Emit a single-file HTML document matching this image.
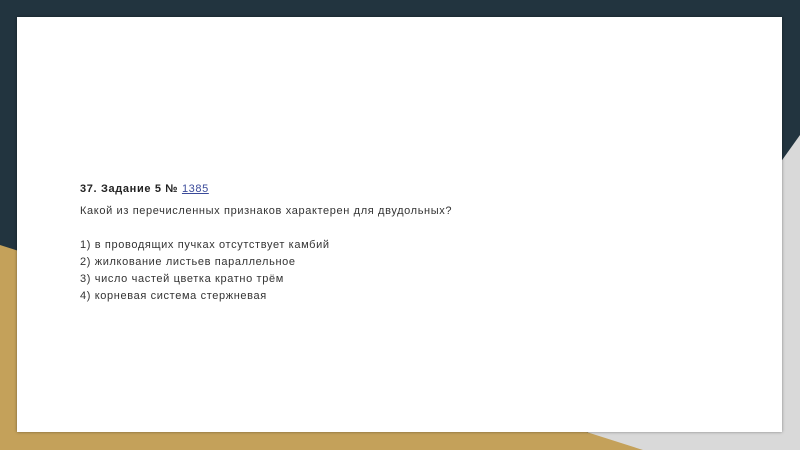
<!DOCTYPE html>
<html><head><meta charset="utf-8"><style>
html,body{margin:0;padding:0;}
body{width:800px;height:450px;position:relative;overflow:hidden;background:#22343f;font-family:"Liberation Sans",sans-serif;}
svg.bg{position:absolute;left:0;top:0;}
.card{position:absolute;left:17px;top:17px;width:765px;height:415px;background:#fff;box-shadow:0 0 3px rgba(0,0,0,.4);}
.t{position:absolute;left:80px;font-size:11px;color:#333;white-space:nowrap;letter-spacing:0.63px;}
b{color:#222;letter-spacing:0.65px}
a{color:#3a4a9a;text-decoration:underline;letter-spacing:0.6px}
</style></head><body>
<svg class="bg" width="800" height="450">
<polygon points="800,135 575,450 800,450" fill="#d9d9d9"/>
<polygon points="0,245 643,450 0,450" fill="#c4a15a"/>
</svg>
<div class="card"></div>
<div class="t" style="top:183px"><b>37. Задание 5 № </b><a>1385</a></div>
<div class="t" style="top:205px">Какой из перечисленных признаков характерен для двудольных?</div>
<div class="t" style="top:239px">1) в проводящих пучках отсутствует камбий</div>
<div class="t" style="top:256px">2) жилкование листьев параллельное</div>
<div class="t" style="top:273px">3) число частей цветка кратно трём</div>
<div class="t" style="top:290px">4) корневая система стержневая</div>
</body></html>
